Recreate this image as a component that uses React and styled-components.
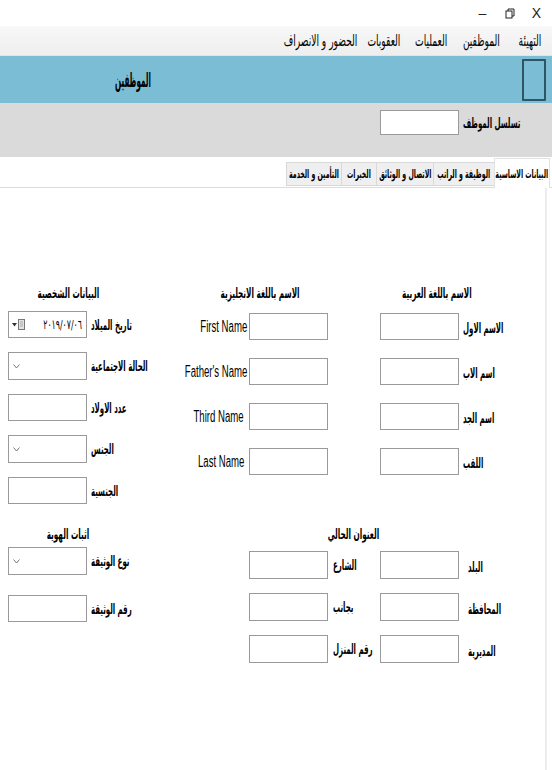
import React from "react";
import styled, {createGlobalStyle, css} from "styled-components";

// the reference is a horizontally squeezed WinForms screenshot, so text is narrowed with scaleX
const SQ = 0.5;

const GlobalStyle = createGlobalStyle`
    html, body {
        margin: 0;
        padding: 0;
        background: #fff;
    }

    body {
        font-family: "DejaVu Sans", sans-serif;
        color: #000;
    }

    * {
        box-sizing: border-box;
    }
`;

const Window = styled.div`
    width: 552px;
    height: 770px;
    display: flex;
    flex-direction: column;
    overflow: hidden;
    background: #fff;
`;

const TitleBar = styled.div`
    height: 26px;
    display: flex;
    justify-content: flex-end;
    align-items: center;
    padding-right: 2px;
`;

const WinBtn = styled.div`
    width: 27px;
    height: 20px;
    display: flex;
    justify-content: center;
    align-items: center;
    font-family: "Liberation Sans", sans-serif;
    font-size: 14px;
    color: #222;
`;

const MenuBar = styled.div`
    height: 30px;
    display: flex;
    direction: rtl;
    align-items: center;
    gap: 9px;
    padding: 0 5px;
    background: linear-gradient(#f8f8f8, #eeeeee);
    border-bottom: 1px solid #e4e4e4;
`;

const MenuItem = styled.span`
    width: ${p => p.$w}px;
    display: flex;
    justify-content: center;
    white-space: nowrap;
    font-size: 16px;

    span {
        display: inline-block;
        transform: scaleX(0.57);
    }
`;

const Header = styled.div`
    height: 47px;
    display: flex;
    align-items: center;
    justify-content: space-between;
    padding: 0 6px 0 115px;
    background: #7bbdd4;
`;

const HeaderTitle = styled.h1`
    margin: 0;
    font-size: 20px;
    font-weight: bold;
    white-space: nowrap;
    transform: scaleX(0.36);
    transform-origin: left center;
`;

const HeaderBox = styled.div`
    width: 24px;
    height: 42px;
    border: 2px solid #2f5564;
    border-radius: 1px;
`;

const SerialBar = styled.div`
    height: 54px;
    display: flex;
    align-items: flex-start;
    padding: 7px 0 0 380px;
    background: #dadada;
`;

const TabStrip = styled.div`
    height: 31px;
    display: flex;
    direction: rtl;
    align-items: flex-end;
    padding-right: 2px;
    border-bottom: 1px solid #dcdcdc;
`;

const Tab = styled.div`
    width: ${p => p.$w}px;
    display: flex;
    justify-content: center;
    align-items: center;
    font-size: 12px;
    font-weight: bold;
    white-space: nowrap;

    span {
        display: inline-block;
        transform: scaleX(0.52);
    }

    ${p => p.$active ? css`
        height: 30px;
        margin-bottom: -1px;
        background: #fff;
        border: 1px solid #e2e2e2;
        border-bottom: none;
    ` : css`
        height: 24px;
        margin-bottom: 1px;
        background: #efefef;
        border: 1px solid #d8d8d8;
        border-right: none;
    `}
`;

const Panel = styled.div`
    flex: 1;
    margin-right: 5px;
    border-right: 2px solid #ececec;
    padding: 97px 0 0 8px;
`;

const FormGrid = styled.div`
    display: grid;
    grid-template-columns: 172px 192px 1fr;
    row-gap: 22px;
`;

const Section = styled.div`
    display: flex;
    flex-direction: column;
    grid-column: ${p => p.$span || "auto"};
`;

const Heading = styled.div`
    width: ${p => p.$width}px;
    height: 16px;
    line-height: 16px;
    display: flex;
    justify-content: center;
    font-size: 14px;
    font-weight: bold;
    white-space: nowrap;
    margin-bottom: ${p => p.$gap}px;

    span {
        display: inline-block;
        transform: scaleX(0.52);
    }
`;

const Columns = styled.div`
    display: grid;
    grid-template-columns: 192px 1fr;
`;

const Fields = styled.div`
    display: flex;
    flex-direction: column;
    gap: ${p => p.$gap}px;
    padding-left: ${p => p.$indent || 0}px;
`;

const Field = styled.div`
    display: flex;
    align-items: center;
    gap: ${p => p.$gap || 4}px;
    height: ${p => p.$h || 27}px;
`;

const Label = styled.span`
    display: inline-block;
    font-size: 14px;
    font-weight: bold;
    white-space: nowrap;
    transform: scaleX(${SQ});
    transform-origin: left center;
    margin-top: ${p => p.$drop || 0}px;
`;

const EnLabel = styled.span`
    width: ${p => p.$width}px;
    display: flex;
    justify-content: flex-end;
    font-family: "Liberation Sans", sans-serif;
    font-size: 16px;
    white-space: nowrap;

    span {
        display: inline-block;
        transform: scaleX(0.6);
        transform-origin: right center;
        margin-right: ${p => p.$pad || 0}px;
    }
`;

const Input = styled.div`
    width: 79px;
    height: 100%;
    flex-shrink: 0;
    border: 1px solid #9a9a9a;
    background: #fff;
`;

const Combo = styled(Input)`
    display: flex;
    align-items: center;
    padding-left: 4px;
`;

const DateBox = styled(Input)`
    display: flex;
    align-items: center;
    justify-content: space-between;
    padding: 0 4px 0 3px;
    font-size: 13px;
`;

const DateText = styled.span`
    display: inline-block;
    width: 40px;
    direction: rtl;
    text-align: right;
    white-space: nowrap;
    transform: scaleX(0.6);
    transform-origin: right center;
`;

const DateIcon = styled.div`
    display: flex;
    align-items: center;
    gap: 1px;
`;

const Chevron = () => (
    <svg width="7" height="5" viewBox="0 0 7 5">
        <path d="M0.5 0.5 L3.5 4 L6.5 0.5" fill="none" stroke="#777" strokeWidth="1"/>
    </svg>
);

const RestoreIcon = () => (
    <svg width="10" height="11" viewBox="0 0 10 11">
        <rect x="1" y="3" width="6" height="7" fill="none" stroke="#222" strokeWidth="1"/>
        <path d="M3 3 V1 H9 V8 H7" fill="none" stroke="#222" strokeWidth="1"/>
    </svg>
);

const CalendarIcon = () => (
    <DateIcon>
        <svg width="5" height="4" viewBox="0 0 5 4">
            <path d="M0 0 H5 L2.5 3.5 Z" fill="#333"/>
        </svg>
        <svg width="7" height="11" viewBox="0 0 7 11">
            <rect x="0.5" y="0.5" width="6" height="10" fill="#e2e2e2" stroke="#777"/>
            <path d="M2 3 H5 M2 5 H5 M2 7 H5" stroke="#aaa"/>
        </svg>
    </DateIcon>
);

const menus = [
    {t: "التهيئة", w: 34},
    {t: "الموظفين", w: 46},
    {t: "العمليات", w: 36},
    {t: "العقوبات", w: 40},
    {t: "الحضور و الانصراف", w: 68},
];

const tabs = [
    {t: "البيانات الاساسية", w: 56},
    {t: "الوظيفة و الراتب", w: 61},
    {t: "الاتصال و الوثائق", w: 57},
    {t: "الخبرات", w: 35},
    {t: "التأمين و الخدمة", w: 55},
];

const arabicNames = ["الاسم الاول", "اسم الاب", "اسم الجد", "اللقب"];
const englishNames = ["First Name", "Father's Name", "Third Name", "Last Name"];

const addressRight = ["البلد", "المحافظة", "المديرية"];
const addressLeft = ["الشارع", "بجانب", "رقم المنزل"];

export default function App() {
    return (
        <Window>
            <GlobalStyle/>
            <TitleBar>
                <WinBtn>–</WinBtn>
                <WinBtn><RestoreIcon/></WinBtn>
                <WinBtn>X</WinBtn>
            </TitleBar>

            <MenuBar>
                {menus.map(m => <MenuItem key={m.t} $w={m.w}><span>{m.t}</span></MenuItem>)}
            </MenuBar>

            <Header>
                <HeaderTitle>الموظفين</HeaderTitle>
                <HeaderBox/>
            </Header>

            <SerialBar>
                <Field $h={25} $gap={4}>
                    <Input/>
                    <Label>تسلسل الموظف</Label>
                </Field>
            </SerialBar>

            <TabStrip>
                {tabs.map((t, i) => <Tab key={t.t} $w={t.w} $active={i === 0}><span>{t.t}</span></Tab>)}
            </TabStrip>

            <Panel>
                <FormGrid>
                    <Section>
                        <Heading $width={120} $gap={10}><span>البيانات الشخصية</span></Heading>
                        <Fields $gap={14}>
                            <Field>
                                <DateBox>
                                    <CalendarIcon/>
                                    <DateText>٢٠١٩/٠٧/٠٦</DateText>
                                </DateBox>
                                <Label>تاريخ الميلاد</Label>
                            </Field>
                            <Field $h={28}>
                                <Combo><Chevron/></Combo>
                                <Label>الحالة الاجتماعية</Label>
                            </Field>
                            <Field>
                                <Input/>
                                <Label>عدد الاولاد</Label>
                            </Field>
                            <Field $h={28}>
                                <Combo><Chevron/></Combo>
                                <Label>الجنس</Label>
                            </Field>
                            <Field>
                                <Input/>
                                <Label>الجنسية</Label>
                            </Field>
                        </Fields>
                    </Section>

                    <Section>
                        <Heading $width={160} $gap={12}><span>الاسم باللغة الانجليزية</span></Heading>
                        <Fields $gap={18}>
                            {englishNames.map((n, i) => (
                                <Field key={n} $gap={2}>
                                    <EnLabel $width={67} $pad={i === 2 || i === 3 ? 3 : 0}><span>{n}</span></EnLabel>
                                    <Input/>
                                </Field>
                            ))}
                        </Fields>
                    </Section>

                    <Section>
                        <Heading $width={130} $gap={12}><span>الاسم باللغة العربية</span></Heading>
                        <Fields $gap={18} $indent={8}>
                            {arabicNames.map(n => (
                                <Field key={n} $gap={4}>
                                    <Input/>
                                    <Label $drop={3}>{n}</Label>
                                </Field>
                            ))}
                        </Fields>
                    </Section>

                    <Section>
                        <Heading $width={120} $gap={5}><span>اثبات الهوية</span></Heading>
                        <Fields $gap={20}>
                            <Field $h={28}>
                                <Combo><Chevron/></Combo>
                                <Label>نوع الوثيقة</Label>
                            </Field>
                            <Field>
                                <Input/>
                                <Label>رقم الوثيقة</Label>
                            </Field>
                        </Fields>
                    </Section>

                    <Section $span="2 / 4">
                        <Heading $width={346} $gap={9}><span>العنوان الحالي</span></Heading>
                        <Columns>
                            <Fields $gap={14} $indent={69}>
                                {addressLeft.map(n => (
                                    <Field key={n} $h={28} $gap={5}>
                                        <Input/>
                                        <Label>{n}</Label>
                                    </Field>
                                ))}
                            </Fields>
                            <Fields $gap={14} $indent={8}>
                                {addressRight.map(n => (
                                    <Field key={n} $h={28} $gap={9}>
                                        <Input/>
                                        <Label $drop={3}>{n}</Label>
                                    </Field>
                                ))}
                            </Fields>
                        </Columns>
                    </Section>
                </FormGrid>
            </Panel>
        </Window>
    );
}
